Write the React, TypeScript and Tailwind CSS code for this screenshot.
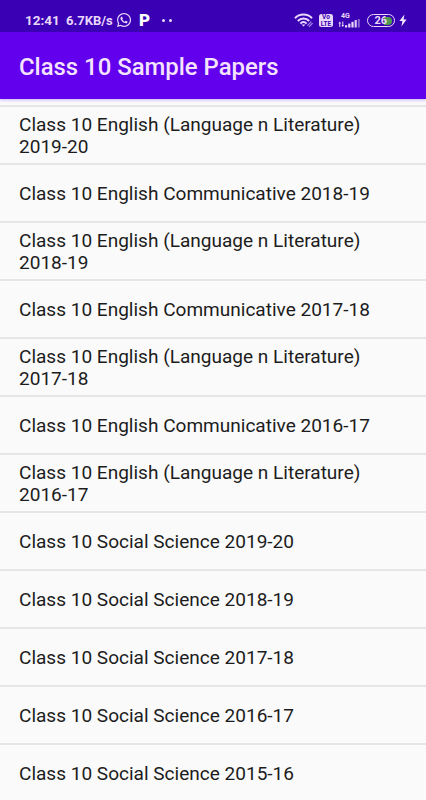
import { FaWhatsapp } from "react-icons/fa";

const PAPERS = [
  "Class 10 English (Language n Literature) 2019-20",
  "Class 10 English Communicative 2018-19",
  "Class 10 English (Language n Literature) 2018-19",
  "Class 10 English Communicative 2017-18",
  "Class 10 English (Language n Literature) 2017-18",
  "Class 10 English Communicative 2016-17",
  "Class 10 English (Language n Literature) 2016-17",
  "Class 10 Social Science 2019-20",
  "Class 10 Social Science 2018-19",
  "Class 10 Social Science 2017-18",
  "Class 10 Social Science 2016-17",
  "Class 10 Social Science 2015-16",
];

function WifiIcon() {
  return (
    <svg className="w-[20px] h-[15px]" viewBox="0 0 20 15" fill="none" stroke="#e9d8fb" strokeWidth="2">
      <path d="M1 5.2C5.5 .4 13.5 .4 18 5.2" />
      <path d="M3.8 8C7 4.6 12 4.6 15.2 8" />
      <path d="M6.4 10.6C8.3 8.6 10.7 8.6 12.6 10.6" />
      <path d="M7.6 11.6L9.5 13.6L11.4 11.6Z" fill="#e9d8fb" stroke="none" />
      <path d="M13.4 12.6L17.4 8.6M15 13.8L18.6 10.2" stroke="#a78bea" strokeWidth="1.2" />
    </svg>
  );
}

function SignalIcon() {
  return (
    <svg className="w-[23px] h-[9px]" viewBox="0 0 23 9" fill="#e9d8fb">
      <path d="M1.8 2.5L3.2 4.5H2.3V8H1.3V4.5H.4ZM4.8 8L3.4 6H4.3V2.5H5.3V6H6.2Z" />
      <rect x="7" y="6.2" width="2.2" height="2.3" />
      <rect x="10.2" y="4.6" width="2.2" height="3.9" />
      <rect x="13.4" y="2.8" width="2.2" height="5.7" />
      <rect x="16.6" y="1" width="2.2" height="7.5" opacity=".9" />
      <rect x="19.8" y="0" width="2" height="8.5" opacity=".45" />
    </svg>
  );
}

function StatusBar() {
  return (
    <div className="h-[32px] shrink-0 bg-[#3a00b3] pt-[8px] pl-[25px] pr-[19px] flex justify-between text-[#e9d8fb]">
      <div className="flex items-center h-[25px]">
        <span className="w-[41px] text-[13.5px] font-bold">12:41</span>
        <span className="w-[50px] text-[13px] font-bold whitespace-nowrap">6.7KB/s</span>
        <FaWhatsapp className="w-[16px] h-[16px] -mt-px" />
        <span className="ml-[7px] w-[12px] text-[17px] leading-none font-black text-white">P</span>
        <div className="ml-[11px] flex gap-[4px]">
          <span className="w-[3px] h-[3px] rounded-full bg-[#e9d8fb]" />
          <span className="w-[3px] h-[3px] rounded-full bg-[#e9d8fb]" />
        </div>
      </div>
      <div className="flex items-center h-[25px]">
        <WifiIcon />
        <div className="ml-[5px] w-[14px] h-[13px] rounded-[2.5px] bg-[#e9d8fb] text-[#3a00b3] text-[6.5px] leading-[6.5px] font-bold text-center">
          <div>Vo</div>
          <div>LTE</div>
        </div>
        <div className="ml-[5px] w-[23px] flex flex-col">
          <span className="pl-[3px] text-[7px] leading-[6px] font-bold">4G</span>
          <SignalIcon />
        </div>
        <div className="ml-[6px] w-[28px] h-[13px] rounded-full border-[1.5px] border-[#e9d8fb] flex items-center justify-end">
          <span className="z-10 text-[11px] leading-none font-bold -mr-[3px]">26</span>
          <span className="w-[8px] h-[8px] mr-[2px] rounded-r-full bg-[#4f9b4e]" />
        </div>
        <svg className="ml-[4px] w-[8px] h-[13px]" viewBox="0 0 8 13" fill="#f3e8fd">
          <path d="M5.4 .5L.4 7H3.4L2.4 12.5L7.6 5.5H4.6Z" />
        </svg>
      </div>
    </div>
  );
}

export default function App() {
  return (
    <div className="w-full h-[800px] overflow-hidden flex flex-col bg-[#fafafa] font-[Roboto,sans-serif]">
      <StatusBar />
      <header className="z-10 h-[67px] shrink-0 bg-[#6200ee] px-[19px] pt-[5px] flex items-center shadow-[0_1px_3px_rgba(98,0,238,0.3)]">
        <h1 className="text-[23.9px] font-medium text-[#f5e3fd]">Class 10 Sample Papers</h1>
      </header>
      <ul className="mt-[6px] border-t-2 border-[#e6e6e6]">
        {PAPERS.map((title) => (
          <li
            key={title}
            className="h-[58px] pl-[19px] pr-[40px] pt-[2px] flex items-center border-b-2 border-[#e6e6e6] text-[19.05px] leading-[22.4px] text-[#1c1c1c]"
          >
            {title}
          </li>
        ))}
      </ul>
    </div>
  );
}
